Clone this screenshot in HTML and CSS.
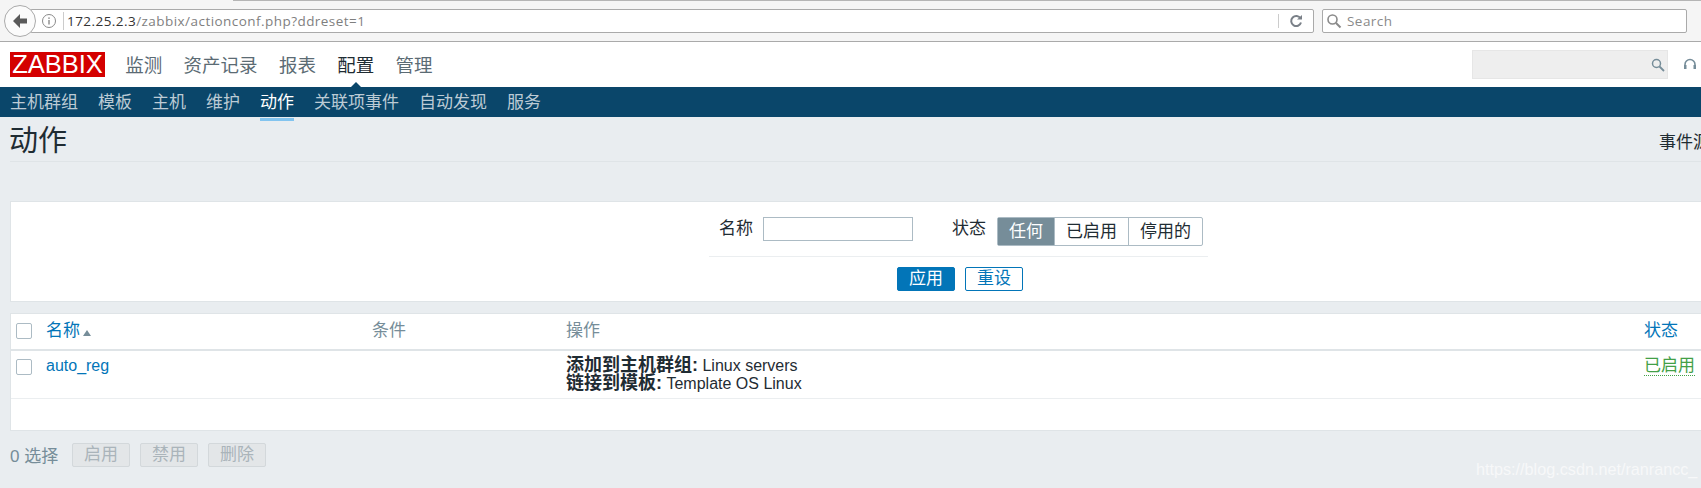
FILE: index.html
```html
<!DOCTYPE html>
<html lang="zh">

<head>
  <meta charset="UTF-8" />
  <title>动作</title>
  <link rel="stylesheet" href="styles.css">
</head>

<body>
  <div class="toolbar">
    <div class="back-button">
      <svg width="20" height="20" viewBox="0 0 20 20"><path d="M10 3 L3 10 L10 17 L10 12.5 L17 12.5 L17 7.5 L10 7.5 Z" fill="#5a5a5a" /></svg>
    </div>
    <div class="url-box">
      <svg class="info-icon" width="16" height="16" viewBox="0 0 16 16"><circle cx="8" cy="8" r="6.5" fill="none" stroke="#8a8a8a" /><rect x="7.3" y="7" width="1.4" height="4.5" fill="#8a8a8a" /><rect x="7.3" y="4.4" width="1.4" height="1.5" fill="#8a8a8a" /></svg>
      <span class="url-text"><b>172.25.2.3</b>/zabbix/actionconf.php?ddreset=1</span>
      <svg class="reload-icon" width="14" height="14" viewBox="0 0 14 14"><path d="M11.5 4.5 A5 5 0 1 0 12 8.5" fill="none" stroke="#7a8088" stroke-width="2" /><path d="M8 5.5 L13 5.5 L13 1 Z" fill="#7a8088" /></svg>
    </div>
    <div class="search-box">
      <svg width="16" height="16" viewBox="0 0 16 16"><circle cx="6.5" cy="6.5" r="4.5" fill="none" stroke="#8a8a8a" stroke-width="1.6" /><path d="M10 10 L14.5 14.5" stroke="#8a8a8a" stroke-width="2" /></svg>
      <span>Search</span>
    </div>
  </div>

  <div class="page">
    <header class="top-nav">
      <div class="logo">ZABBIX</div>
      <a href="#">监测</a>
      <a href="#">资产记录</a>
      <a href="#">报表</a>
      <a href="#" class="selected">配置</a>
      <a href="#">管理</a>
      <div class="global-search">
        <svg width="14" height="14" viewBox="0 0 14 14"><circle cx="5.5" cy="5.5" r="4" fill="none" stroke="#768d99" stroke-width="1.5" /><path d="M8.5 8.5 L13 13" stroke="#768d99" stroke-width="1.8" /></svg>
      </div>
      <svg class="support-icon" width="14" height="14" viewBox="0 0 14 14"><path d="M2 9 V6.5 A5 5 0 0 1 12 6.5 V9" fill="none" stroke="#768d99" stroke-width="1.6" /><rect x="1" y="7" width="2.5" height="4" fill="#768d99" /><rect x="10.5" y="7" width="2.5" height="4" fill="#768d99" /></svg>
    </header>

    <nav class="sub-nav">
      <a href="#">主机群组</a>
      <a href="#">模板</a>
      <a href="#">主机</a>
      <a href="#">维护</a>
      <a href="#" class="selected">动作</a>
      <a href="#">关联项事件</a>
      <a href="#">自动发现</a>
      <a href="#">服务</a>
    </nav>

    <main>
      <div class="title-row">
        <h1>动作</h1>
        <span>事件源</span>
      </div>

      <section class="filter">
        <div class="filter-fields">
          <label>名称</label>
          <input type="text" class="name-input">
          <label class="status-label">状态</label>
          <div class="segments">
            <span class="on">任何</span>
            <span>已启用</span>
            <span>停用的</span>
          </div>
        </div>
        <div class="filter-buttons">
          <button class="btn-apply">应用</button>
          <button class="btn-reset">重设</button>
        </div>
      </section>

      <section class="list">
        <table>
          <thead>
            <tr>
              <th class="col-check"><span class="check"></span></th>
              <th class="col-name"><a href="#">名称</a><i class="sort-arrow"></i></th>
              <th class="col-cond">条件</th>
              <th class="col-ops">操作</th>
              <th><a href="#">状态</a></th>
            </tr>
          </thead>
          <tbody>
            <tr>
              <td><span class="check"></span></td>
              <td><a href="#" class="action-name">auto_reg</a></td>
              <td></td>
              <td class="ops"><b>添加到主机群组:</b> Linux servers<br><b>链接到模板:</b> Template OS Linux</td>
              <td><a href="#" class="enabled">已启用</a></td>
            </tr>
          </tbody>
        </table>
      </section>

      <div class="actions">
        <span class="selected-count">0 选择</span>
        <button disabled>启用</button>
        <button disabled>禁用</button>
        <button disabled>删除</button>
        <span class="watermark">https://blog.csdn.net/ranrancc_</span>
      </div>
    </main>
  </div>
</body>

</html>
```

FILE: styles.css
```css
:root {
  --bg-page: #e9edf0;
  --border: #dfe4e7;
  --navy: #0a466a;
  --link: #0275b8;
  --muted: #768d99;
  --text: #1f2c33;
}

* {
  margin: 0;
  padding: 0;
  box-sizing: border-box;
}

html,
body {
  height: 488px;
  overflow: hidden;
}

body {
  font-family: "Liberation Sans", "Noto Sans CJK SC", sans-serif;
  font-size: 17px;
  color: var(--text);
  background: var(--bg-page);
}

a {
  text-decoration: none;
}

/* browser chrome */
.toolbar {
  position: relative;
  height: 42px;
  display: flex;
  align-items: center;
  padding: 0 14px 0 4px;
  background: #f5f5f5;
  border-bottom: 1px solid #aaa;
}

.toolbar::before {
  content: "";
  position: absolute;
  top: 0;
  left: 233px;
  right: 0;
  height: 1px;
  background: #b5b5b5;
}

.back-button {
  position: relative;
  z-index: 1;
  width: 32px;
  height: 32px;
  flex: none;
  display: flex;
  align-items: center;
  justify-content: center;
  background: #fbfbfb;
  border: 1px solid #aaa;
  border-radius: 50%;
}

.url-box,
.search-box {
  height: 24px;
  display: flex;
  align-items: center;
  background: #fff;
  border: 1px solid #aaa;
  border-radius: 2px;
  font-family: "Open Sans", sans-serif;
  font-size: 13.5px;
  letter-spacing: 0.45px;
}

.url-box {
  flex: 1;
  margin-left: -6px;
  padding-left: 10px;
  color: #7f7f7f;
}

.info-icon {
  flex: none;
}

.url-text {
  flex: 1;
  margin-left: 6px;
  padding-left: 3px;
  border-left: 1px solid #ccc;
}

.url-text b {
  font-weight: 400;
  color: #333;
}

.reload-icon {
  flex: none;
  box-sizing: content-box;
  padding: 0 10px;
  border-left: 1px solid #ccc;
}

.search-box {
  width: 365px;
  flex: none;
  margin-left: 8px;
  padding-left: 3px;
  gap: 5px;
  color: #8a8a8a;
}

/* zabbix page */
.page {
  width: 1720px;
}

.top-nav {
  height: 45px;
  display: flex;
  align-items: center;
  gap: 21.3px;
  padding-left: 10px;
  background: #fff;
  font-size: 18.5px;
}

.top-nav a {
  margin-bottom: 2px;
  color: #5b6b74;
}

.top-nav a.selected {
  position: relative;
  color: var(--text);
}

.top-nav a.selected::after {
  content: "";
  position: absolute;
  left: 50%;
  bottom: -13px;
  margin-left: -8px;
  border: 8px solid transparent;
  border-top: 0;
  border-bottom-color: var(--navy);
}

.logo {
  width: 95px;
  height: 25px;
  margin-right: -1px;
  background: #d40000;
  color: #fff;
  font-size: 25.5px;
  line-height: 25px;
  text-align: center;
}

.global-search {
  width: 196px;
  height: 29px;
  margin-left: auto;
  margin-right: -6px;
  display: flex;
  align-items: center;
  justify-content: flex-end;
  padding-right: 2px;
  background: #eee;
  border: 1px solid #e6e6e6;
}

.support-icon {
  margin-right: 23px;
}

.sub-nav {
  height: 30px;
  display: flex;
  align-items: center;
  gap: 20px;
  padding-left: 10px;
  background: var(--navy);
}

.sub-nav a {
  position: relative;
  margin-bottom: 3px;
  color: #bccbd5;
}

.sub-nav a.selected {
  color: #fff;
}

.sub-nav a.selected::after {
  content: "";
  position: absolute;
  left: 0;
  right: 0;
  bottom: -8px;
  height: 3px;
  background: #82c4ef;
}

.title-row {
  height: 45px;
  margin: 0 0 39px 10px;
  display: flex;
  align-items: center;
  justify-content: space-between;
  padding-right: 10px;
  border-bottom: 1px solid var(--border);
}

.title-row h1 {
  margin: 0 0 3px -1px;
  font-size: 29px;
  font-weight: 400;
}

.title-row span {
  margin-top: 3px;
}

.filter,
.list {
  margin-left: 10px;
  background: #fff;
  border: 1px solid var(--border);
}

.filter {
  height: 101px;
  padding: 15px 0 0 698px;
}

.filter-fields {
  width: 499px;
  height: 40px;
  display: flex;
  align-items: flex-start;
  padding-left: 10px;
  border-bottom: 1px solid #ebeef0;
}

.filter-fields label {
  line-height: 24px;
  margin-right: 10px;
}

.filter-fields .status-label {
  margin-left: 39px;
  margin-right: 11px;
}

.name-input {
  width: 150px;
  height: 24px;
  border: 1px solid #acbbc4;
}

.segments {
  display: flex;
  height: 29px;
  border: 1px solid #acbbc4;
  border-radius: 2px;
}

.segments span {
  padding: 0 11px;
  line-height: 27px;
  border-left: 1px solid #acbbc4;
}

.segments span:first-child {
  border-left: 0;
}

.segments .on {
  background: var(--muted);
  color: #fff;
}

.filter-buttons {
  width: 499px;
  display: flex;
  margin-top: 10px;
  padding-left: 188px;
  gap: 10px;
}

.filter-buttons button {
  width: 58px;
  height: 24px;
  border: 1px solid var(--link);
  border-radius: 2px;
  font: inherit;
  line-height: 20px;
}

.btn-apply {
  background: var(--link);
  color: #fff;
}

.btn-reset {
  background: #fff;
  color: var(--link);
}

.list {
  height: 118px;
  margin-top: 11px;
}

table {
  width: 100%;
  border-collapse: collapse;
  table-layout: fixed;
}

th,
td {
  text-align: left;
  vertical-align: top;
  font-weight: 400;
}

thead tr {
  height: 36px;
  border-bottom: 2px solid #dfe4e7;
}

th {
  padding-top: 6px;
  color: var(--muted);
  line-height: 22px;
}

th a,
td a {
  color: var(--link);
}

tbody tr {
  height: 48px;
  border-bottom: 1px solid #ebeef0;
}

td {
  padding-top: 6px;
  line-height: 18px;
}

.col-check {
  width: 35px;
}

.col-name {
  width: 326px;
}

.col-cond {
  width: 194px;
}

.col-ops {
  width: 1078px;
}

.check {
  display: block;
  width: 16px;
  height: 16px;
  margin: 3px 0 0 5px;
  background: #fff;
  border: 1px solid #acbbc4;
  border-radius: 2px;
}

td .check {
  margin-top: 2px;
}

.sort-arrow {
  display: inline-block;
  margin-left: 3px;
  border: 4px solid transparent;
  border-top: 0;
  border-bottom: 6px solid var(--muted);
}

.action-name {
  font-size: 16px;
}

.ops {
  font-size: 16px;
  line-height: 17.5px;
}

.ops b {
  font-size: 18px;
}

.enabled {
  color: #43a047 !important;
  border-bottom: 1px dotted #43a047;
}

.actions {
  position: relative;
  display: flex;
  align-items: center;
  gap: 10px;
  margin: 11px 0 0 10px;
  color: var(--muted);
}

.selected-count {
  width: 52px;
}

.actions button {
  width: 58px;
  height: 24px;
  background: #e3e6e8;
  border: 1px solid #d3d8db;
  border-radius: 2px;
  color: #aab4ba;
  font: inherit;
  line-height: 20px;
}

.watermark {
  position: absolute;
  left: 1466px;
  top: 18px;
  font-size: 16.2px;
  color: #f7f8f9;
  white-space: nowrap;
}
```
